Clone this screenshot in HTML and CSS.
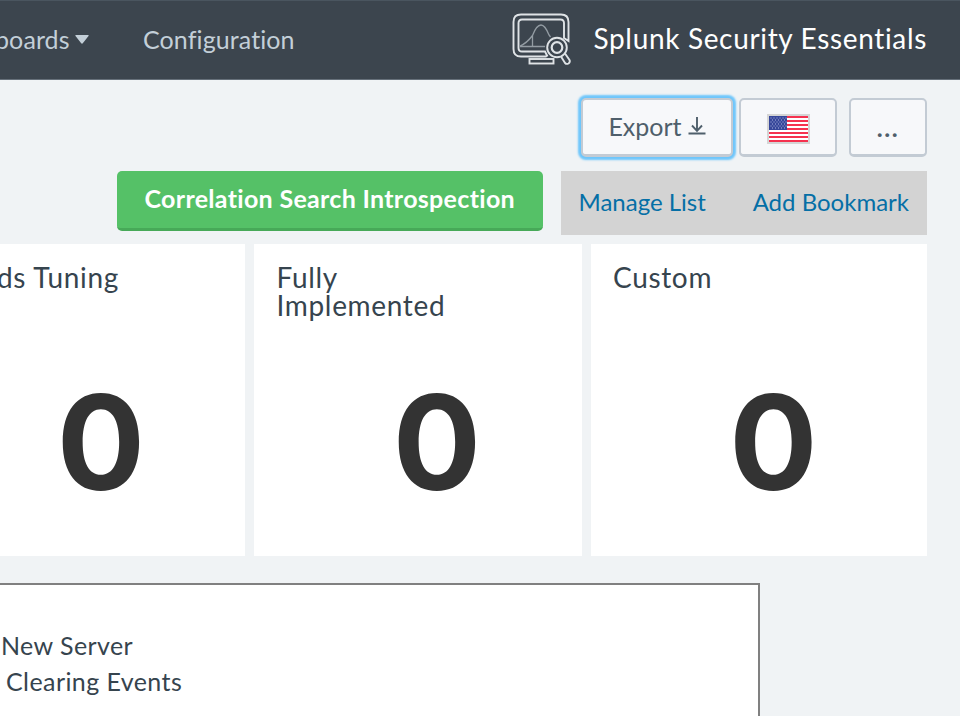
FILE: index.html
```html
<!DOCTYPE html>
<html lang="en">
<head>
<meta charset="utf-8">
<title>Splunk Security Essentials</title>
<link rel="stylesheet" href="styles.css">
</head>
<body>
<header class="topbar">
  <nav class="nav">
    <a class="nav-item nav-boards"><span>boards</span><svg class="caret" viewBox="0 0 14 9" width="14" height="9"><path d="M1 0h12q1.300 0 .5 1L7.800 8.300q-.8 .8-1.600 0L.5 1Q-.3 0 1 0z" fill="#c3cfd8"/></svg></a>
    <a class="nav-item">Configuration</a>
  </nav>
  <div class="brand">
    <svg class="logo" viewBox="0 0 60 54" width="60" height="54" fill="none" stroke="#dfe3e6" stroke-width="1.900">
      <path d="M34.500 43.500H9Q1.500 43.500 1.500 36V9Q1.500 1.500 9 1.500H49Q56.500 1.500 56.500 9V28L52 25V10Q52 6.500 48.500 6.500H10Q6.500 6.500 6.500 10V35Q6.500 38.500 10 38.500H33L35.500 43.500"/>
      <path d="M8 33Q15 30 20.500 22.500Q24.500 12 29 12Q33 12 37 22L38.500 24M20.500 22V33.500M8 33.500H33" stroke="#939ca3" stroke-width="1.300"/>
      <rect x="17.500" y="46" width="24" height="4.500"/>
      <circle cx="45" cy="34.500" r="9.800"/>
      <circle cx="45" cy="34.500" r="5.300" stroke-width="2.200"/>
      <path d="M49 43.500L53 50Q54.500 51.500 56.500 50.500Q58.500 49 57.500 47L53 40.500"/>
    </svg>
    <span class="brand-name">Splunk Security Essentials</span>
  </div>
</header>
<main>
  <div class="tools">
    <button class="btn btn-export">Export<svg viewBox="0 0 18 20" width="18" height="20" fill="none" stroke="#4f5f6b" stroke-width="1.900"><path d="M9 1V15M4 9.500L9 14.800L14 9.500M.5 17.500H17.500"/></svg></button>
    <button class="btn btn-flag" aria-label="Language">
      <svg viewBox="0 0 43 30" width="43" height="30">
        <path fill="#d5d5d5" d="M0 0h43v30H0z"/>
        <path fill="#fff" d="M2 2h39v26H2z"/>
        <path stroke="#f5324f" stroke-width="2" d="M2 3h39M2 7h39M2 11h39M2 15h39M2 19h39M2 23h39M2 27h39"/>
        <path fill="#37479a" d="M2 2h18v14H2z"/>
        <path stroke="#aeb6e0" stroke-width="1" stroke-dasharray="1 2" d="M3.500 4h16M3.500 8h16M3.500 12h16M5 6h14M5 10h14M5 14h14"/>
      </svg>
    </button>
    <button class="btn btn-more">...</button>
  </div>
  <div class="actions">
    <button class="primary">Correlation Search Introspection</button>
    <div class="links"><a>Manage List</a><a>Add Bookmark</a></div>
  </div>
  <section class="cards">
    <article class="card card-tuning"><h2>ds Tuning</h2><div class="value">0</div></article>
    <article class="card"><h2>Fully<br>Implemented</h2><div class="value">0</div></article>
    <article class="card"><h2>Custom</h2><div class="value">0</div></article>
  </section>
  <section class="panel">
    <div>New Server</div>
    <div class="indent">Clearing Events</div>
  </section>
</main>
</body>
</html>
```
FILE: styles.css
```css
* { box-sizing: border-box; }
body {
  margin: 0;
  height: 716px;
  overflow: hidden;
  background: #f0f3f5;
  color: #36444e;
  font: 25px/36px Lato, "Liberation Sans", sans-serif;
  font-variant-ligatures: none;
}
button { font: inherit; }
.topbar {
  display: flex;
  justify-content: space-between;
  height: 80px;
  padding-right: 33px;
  background: #3c454e;
  border-top: 1px solid #4a555f;
  border-bottom: 1px solid #66707a;
}
.nav { display: flex; align-items: center; padding-bottom: 2px; color: #c3cfd8; }
.nav-item { letter-spacing: .1px; }
.nav-boards { display: flex; align-items: center; width: 142px; margin-left: -7px; padding-left: 2px; margin-right: 8px; }
.caret { margin-left: 5px; }
.brand { display: flex; align-items: center; }
.logo { margin-right: 21px; }
.brand-name { padding-bottom: 4px; color: #fff; font-size: 28px; letter-spacing: .66px; }
.tools { display: flex; padding: 18px 33px 0 581px; height: 91px; }
.btn {
  display: flex;
  align-items: center;
  justify-content: center;
  height: 59px;
  padding: 0;
  border: 2px solid #c3cbd4;
  border-bottom-width: 3px;
  border-radius: 5px;
  background: #f7f8fa;
  color: #4f5f6b;
}
.btn-export { width: 152px; margin-right: 6px; box-shadow: 0 0 2px 3px #6ec6fb; padding-bottom: 3px; }
.btn-export svg { margin-left: 6px; }
.btn-flag { width: 98px; margin-right: 12px; }
.btn-flag svg { margin-top: 3px; }
.btn-more { width: 78px; letter-spacing: 1.500px; font-weight: 700; }
.actions { display: flex; height: 64px; padding: 0 33px 0 117px; }
.primary {
  width: 425.500px;
  height: 60px;
  margin-right: 18px;
  padding: 0 0 3px;
  border: 0;
  border-bottom: 3px solid #47a958;
  border-radius: 5px;
  background: #55c167;
  color: #fff;
  font-weight: 700;
  letter-spacing: .31px;
}
.links {
  display: flex;
  justify-content: space-between;
  flex: 1;
  padding: 13px 18px 0 18px;
  background: #d3d3d3;
  color: #056fa6;
  font-size: 24px;
}
.cards {
  display: grid;
  grid-template-columns: 245px 327.500px 336.500px;
  gap: 9px;
  height: 312px;
  margin-top: 9px;
}
.card { padding: 19px 0 0 22.500px; background: #fff; }
.card h2 {
  height: 113px;
  margin: 0;
  font-size: 28px;
  font-weight: 400;
  line-height: 28px;
  letter-spacing: .67px;
}
.value {
  width: 321px;
  height: 133px;
  color: #333;
  font: 700 131px/133px Inter, sans-serif;
  text-align: center;
}
.card-tuning { padding-left: 0; }
.card-tuning h2 { margin-left: -3px; }
.card-tuning .value { width: 202px; }
.panel {
  width: 760px;
  height: 160px;
  margin-top: 27px;
  padding: 42px 0 0 1px;
  border: solid #808080;
  border-width: 2px 2px 0 0;
  background: #fff;
  letter-spacing: .42px;
}
.indent { margin-left: 5px; }
```
